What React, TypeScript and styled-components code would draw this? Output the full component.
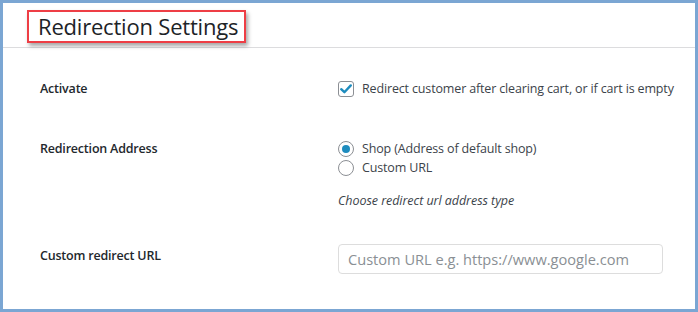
import React from 'react';
import styled, { createGlobalStyle } from 'styled-components';

const FONT = "'Open Sans', 'Noto Sans', 'Liberation Sans', sans-serif";

const GlobalStyle = createGlobalStyle`
  html, body { margin: 0; padding: 0; background: #ffffff; }
  body { font-family: ${FONT}; color: #23282d; }
  * { box-sizing: border-box; }
`;

const Frame = styled.div`
  width: 698px;
  height: 312px;
  border: 3px solid #7ba6d3;
  background: #ffffff;
  overflow: hidden;
`;

const Header = styled.div`
  height: 45px;
  border-bottom: 1px solid #dcdcde;
  padding: 7px 0 0 24px;
`;

const TitleBox = styled.div`
  display: inline-block;
  border: 2px solid #ee3e45;
  padding: 1px 6px 1px 9px;
  box-shadow: 2px 3px 4px rgba(0, 0, 0, 0.35);
`;

const Title = styled.h2`
  margin: 0;
  font-size: 22px;
  font-weight: 400;
  line-height: 27px;
  color: #1d2327;
  letter-spacing: -0.2px;
`;

const Form = styled.div`
  padding: 11px 0 0 37px;
`;

const Row = styled.div<{ $top: number; $bottom: number }>`
  display: grid;
  grid-template-columns: 298px 1fr;
  padding-top: ${(p) => p.$top}px;
  padding-bottom: ${(p) => p.$bottom}px;
`;

const Label = styled.div<{ $offset?: number }>`
  font-size: 12.5px;
  font-weight: 600;
  line-height: 20px;
  color: #23282d;
  padding-top: ${(p) => p.$offset ?? 0}px;
  letter-spacing: -0.2px;
`;

const Field = styled.div`
  display: flex;
  flex-direction: column;
`;

const Option = styled.label`
  display: flex;
  align-items: center;
  gap: 8px;
  font-size: 12.5px;
  line-height: 19px;
  color: #3c434a;
  letter-spacing: -0.15px;
`;

const Box = styled.span`
  width: 16px;
  height: 16px;
  border: 1px solid #8c8f94;
  border-radius: 3px;
  display: flex;
  align-items: center;
  justify-content: center;
  flex-shrink: 0;
  background: #fff;
`;

const Radio = styled.span<{ $checked?: boolean }>`
  width: 16px;
  height: 16px;
  border: 1px solid #8c8f94;
  border-radius: 50%;
  display: flex;
  align-items: center;
  justify-content: center;
  flex-shrink: 0;
  background: #fff;

  &::after {
    content: '';
    width: 8px;
    height: 8px;
    border-radius: 50%;
    background: ${(p) => (p.$checked ? '#1e8cbe' : 'transparent')};
  }
`;

const Description = styled.p`
  margin: 14px 0 0;
  font-size: 12.5px;
  font-style: italic;
  line-height: 20px;
  color: #3c434a;
  letter-spacing: -0.05px;
`;

const TextInput = styled.input`
  width: 325px;
  height: 30px;
  border: 1px solid #dddddd;
  border-radius: 4px;
  padding: 0 9px;
  font-family: ${FONT};
  font-size: 14.6px;
  color: #3c434a;
  outline: none;

  &::placeholder {
    color: #8a8f94;
  }
`;

const Check = () => (
  <svg width="14" height="14" viewBox="0 0 14 14" aria-hidden="true">
    <path d="M2.2 7.2 L5.4 10.2 L11.8 3.4" fill="none" stroke="#1e8cbe" strokeWidth="2.4" strokeLinecap="round" strokeLinejoin="round" />
  </svg>
);

export default function App() {
  return (
    <>
      <GlobalStyle />
      <Frame>
        <Header>
          <TitleBox>
            <Title>Redirection Settings</Title>
          </TitleBox>
        </Header>
        <Form>
          <Row $top={20} $bottom={20}>
            <Label>Activate</Label>
            <Field>
              <Option>
                <Box>
                  <Check />
                </Box>
                Redirect customer after clearing cart, or if cart is empty
              </Option>
            </Field>
          </Row>
          <Row $top={20} $bottom={17}>
            <Label>Redirection Address</Label>
            <Field>
              <Option>
                <Radio $checked />
                Shop (Address of default shop)
              </Option>
              <Option>
                <Radio />
                Custom URL
              </Option>
              <Description>Choose redirect url address type</Description>
            </Field>
          </Row>
          <Row $top={16} $bottom={20}>
            <Label $offset={2}>Custom redirect URL</Label>
            <Field>
              <TextInput placeholder="Custom URL e.g. https://www.google.com" />
            </Field>
          </Row>
        </Form>
      </Frame>
    </>
  );
}
